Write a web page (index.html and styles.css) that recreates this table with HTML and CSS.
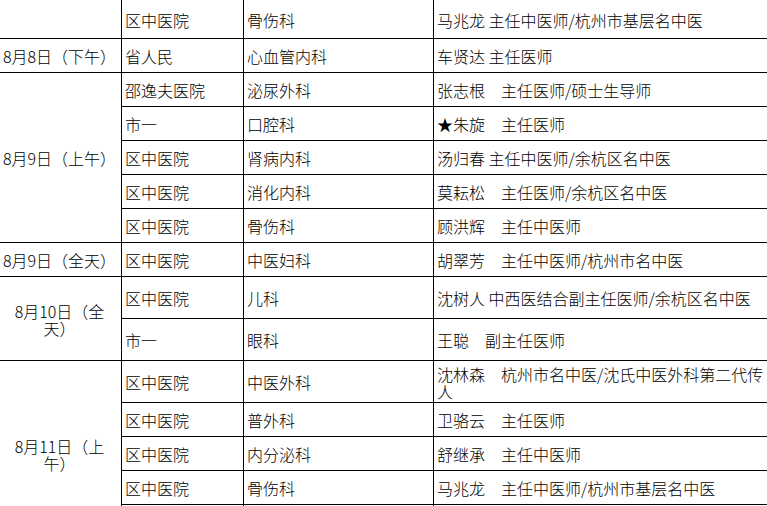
FILE: index.html
```html
<!DOCTYPE html>
<html lang="zh-CN">
<head>
<meta charset="utf-8">
<title>专家排班表</title>
<link rel="stylesheet" href="styles.css">
</head>
<body>
<div class="viewport">
<table class="schedule">
  <colgroup>
    <col class="c-date">
    <col class="c-hosp">
    <col class="c-dept">
    <col class="c-doc">
  </colgroup>
  <tbody>
    <tr class="r-first">
      <td class="date"></td>
      <td>区中医院</td>
      <td>骨伤科</td>
      <td>马兆龙 主任中医师/杭州市基层名中医</td>
    </tr>
    <tr>
      <td class="date">8月8日（下午）</td>
      <td>省人民</td>
      <td>心血管内科</td>
      <td>车贤达 主任医师</td>
    </tr>
    <tr>
      <td class="date" rowspan="5">8月9日（上午）</td>
      <td>邵逸夫医院</td>
      <td>泌尿外科</td>
      <td>张志根　主任医师/硕士生导师</td>
    </tr>
    <tr>
      <td>市一</td>
      <td>口腔科</td>
      <td>★朱旋　主任医师</td>
    </tr>
    <tr>
      <td>区中医院</td>
      <td>肾病内科</td>
      <td>汤归春 主任中医师/余杭区名中医</td>
    </tr>
    <tr>
      <td>区中医院</td>
      <td>消化内科</td>
      <td>莫耘松　主任医师/余杭区名中医</td>
    </tr>
    <tr>
      <td>区中医院</td>
      <td>骨伤科</td>
      <td>顾洪辉　主任中医师</td>
    </tr>
    <tr>
      <td class="date">8月9日（全天）</td>
      <td>区中医院</td>
      <td>中医妇科</td>
      <td>胡翠芳　主任中医师/杭州市名中医</td>
    </tr>
    <tr class="r-tall">
      <td class="date" rowspan="2">8月10日（全天）</td>
      <td>区中医院</td>
      <td>儿科</td>
      <td>沈树人 中西医结合副主任医师/余杭区名中医</td>
    </tr>
    <tr class="r-tall">
      <td>市一</td>
      <td>眼科</td>
      <td>王聪　副主任医师</td>
    </tr>
    <tr class="r-tall">
      <td class="date" rowspan="5">8月11日（上午）</td>
      <td>区中医院</td>
      <td>中医外科</td>
      <td>沈林森　杭州市名中医/沈氏中医外科第二代传人</td>
    </tr>
    <tr>
      <td>区中医院</td>
      <td>普外科</td>
      <td>卫骆云　主任医师</td>
    </tr>
    <tr>
      <td>区中医院</td>
      <td>内分泌科</td>
      <td>舒继承　主任中医师</td>
    </tr>
    <tr>
      <td>区中医院</td>
      <td>骨伤科</td>
      <td>马兆龙　主任中医师/杭州市基层名中医</td>
    </tr>
    <tr class="r-tail">
      <td></td>
      <td></td>
      <td></td>
    </tr>
  </tbody>
</table>
</div>
</body>
</html>
```

FILE: styles.css
```css
html, body {
  margin: 0;
  padding: 0;
  background: #fff;
}

.viewport {
  width: 767px;
  height: 506px;
  overflow: hidden;
}

.schedule {
  border-collapse: collapse;
  table-layout: fixed;
  width: 778px;
  margin-left: -3px;
  margin-top: -9px;
  font-family: "Noto Sans CJK SC", "Noto Sans", sans-serif;
  font-weight: 300;
  font-size: 16px;
  line-height: 17px;
  color: #000;
  text-spacing-trim: space-all;
}

.c-date { width: 124px; }
.c-hosp { width: 122px; }
.c-dept { width: 190px; }
.c-doc  { width: 342px; }

.schedule td {
  border: 1px solid #000;
  padding: 2px 3px 0 3px;
  height: 31px;
  vertical-align: middle;
  text-align: left;
}

.schedule td.date {
  text-align: center;
  padding-left: 4px;
  padding-right: 4px;
}

.schedule .r-first td {
  height: 36px;
  padding-top: 10px;
}

.schedule .r-tall td {
  height: 39px;
}

.schedule .r-tail td {
  height: 40px;
}
```
